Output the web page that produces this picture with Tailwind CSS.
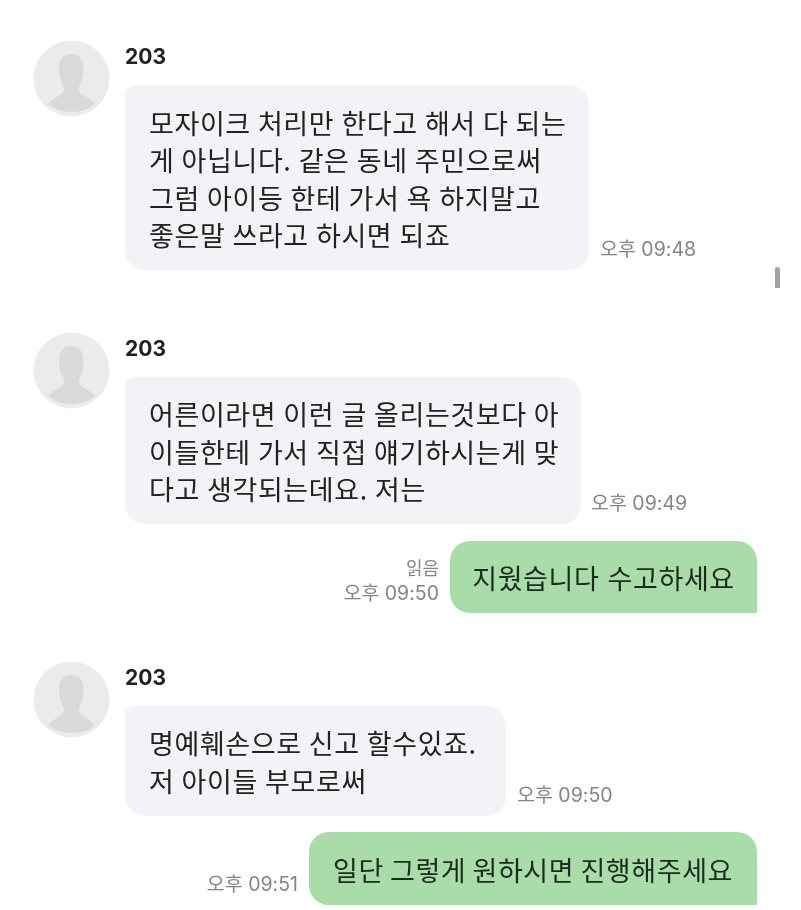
<!DOCTYPE html>
<html lang="ko">
<head>
<meta charset="utf-8">
<script src="https://cdn.jsdelivr.net/npm/@tailwindcss/browser@4"></script>
</head>
<body class="bg-white overflow-hidden">
<main class="relative w-[801px] h-[910px] pt-10 pr-[44px] pl-[33px] flex flex-col font-['Noto_Sans_CJK_KR','Noto_Sans',sans-serif] text-[#222222] blur-[0.4px]">

  <section class="flex gap-[15px]">
    <svg class="w-[77px] h-[77px] shrink-0 blur-[0.5px]" viewBox="0 0 77 77"><circle cx="38.5" cy="38.5" r="38" fill="#ebebec"/><path d="M38 14c-8 0-12.500 6-12 15 .3 7 2 13 4.500 17 1 2 1 5-.5 6.500C27 56 20 58 15 64c6 5 14 8 23.500 8S56 69 62 64c-5-6-12-8-15-11.500-1.500-1.500-1.500-4.500-.5-6.500 2.500-4 4-10 4.200-17C51 20 46 14 38 14z" fill="#d8d9da"/></svg>
    <div class="flex flex-col">
      <div class="h-[45px] leading-[34px] text-[21px] font-bold font-['Inter',sans-serif]">203</div>
      <div class="flex items-end gap-[11px]">
        <p class="bg-[#f2f3f7] rounded-[20px] rounded-tl-[10px] w-[464px] px-6 pt-[18.5px] pb-[16.5px] text-[27px] leading-[37.5px] tracking-[0.6px] [word-spacing:-1px] whitespace-nowrap">모자이크 처리만 한다고 해서 다 되는<br>게 아닙니다. 같은 동네 주민으로써<br>그럼 아이등 한테 가서 욕 하지말고<br>좋은말 쓰라고 하시면 되죠</p>
        <span class="mb-[8px] font-['Inter','Noto_Sans_CJK_KR',sans-serif] text-[19.5px] leading-[26px] text-[#858585] whitespace-nowrap">오후 09:48</span>
      </div>
    </div>
  </section>

  <section class="flex gap-[15px] mt-[62px]">
    <svg class="w-[77px] h-[77px] shrink-0 blur-[0.5px]" viewBox="0 0 77 77"><circle cx="38.5" cy="38.5" r="38" fill="#ebebec"/><path d="M38 14c-8 0-12.500 6-12 15 .3 7 2 13 4.500 17 1 2 1 5-.5 6.500C27 56 20 58 15 64c6 5 14 8 23.500 8S56 69 62 64c-5-6-12-8-15-11.500-1.500-1.500-1.500-4.500-.5-6.500 2.500-4 4-10 4.200-17C51 20 46 14 38 14z" fill="#d8d9da"/></svg>
    <div class="flex flex-col">
      <div class="h-[45px] leading-[34px] text-[21px] font-bold font-['Inter',sans-serif]">203</div>
      <div class="flex items-end gap-[10px]">
        <p class="bg-[#f2f3f7] rounded-[20px] rounded-tl-[10px] w-[456px] px-6 pt-[18px] pb-[16px] text-[27px] leading-[37.5px] tracking-[0.6px] [word-spacing:-1px] whitespace-nowrap">어른이라면 이런 글 올리는것보다 아<br>이들한테 가서 직접 얘기하시는게 맞<br>다고 생각되는데요. 저는</p>
        <span class="mb-[8px] font-['Inter','Noto_Sans_CJK_KR',sans-serif] text-[19.5px] leading-[26px] text-[#858585] whitespace-nowrap">오후 09:49</span>
      </div>
    </div>
  </section>

  <section class="flex justify-end items-end gap-[11px] mt-[17px]">
    <div class="flex flex-col items-end mb-[8px] font-['Inter','Noto_Sans_CJK_KR',sans-serif] text-[#858585] whitespace-nowrap">
      <span class="text-[18px] leading-[24px]">읽음</span>
      <span class="text-[19.5px] leading-[24px]">오후 09:50</span>
    </div>
    <p class="bg-[#aadcaa] rounded-[20px] rounded-br-none h-[72px] w-[307px] text-center text-[27px] leading-[74px] tracking-[0.6px] text-[#1c2b1f] whitespace-nowrap">지웠습니다 수고하세요</p>
  </section>

  <section class="flex gap-[15px] mt-[48px]">
    <svg class="w-[77px] h-[77px] shrink-0 blur-[0.5px]" viewBox="0 0 77 77"><circle cx="38.5" cy="38.5" r="38" fill="#ebebec"/><path d="M38 14c-8 0-12.500 6-12 15 .3 7 2 13 4.500 17 1 2 1 5-.5 6.500C27 56 20 58 15 64c6 5 14 8 23.500 8S56 69 62 64c-5-6-12-8-15-11.500-1.500-1.500-1.500-4.500-.5-6.500 2.500-4 4-10 4.200-17C51 20 46 14 38 14z" fill="#d8d9da"/></svg>
    <div class="flex flex-col">
      <div class="h-[45px] leading-[34px] text-[21px] font-bold font-['Inter',sans-serif]">203</div>
      <div class="flex items-end gap-[11px]">
        <p class="bg-[#f2f3f7] rounded-[20px] rounded-tl-[10px] w-[381px] px-6 pt-[18.5px] pb-[16.5px] text-[27px] leading-[37.5px] tracking-[0.6px] [word-spacing:-1px] whitespace-nowrap">명예훼손으로 신고 할수있죠.<br>저 아이들 부모로써</p>
        <span class="mb-[8px] font-['Inter','Noto_Sans_CJK_KR',sans-serif] text-[19.5px] leading-[26px] text-[#858585] whitespace-nowrap">오후 09:50</span>
      </div>
    </div>
  </section>

  <section class="flex justify-end items-end gap-[11px] mt-[16px]">
    <span class="mb-[8px] font-['Inter','Noto_Sans_CJK_KR',sans-serif] text-[19.5px] leading-[26px] text-[#858585] whitespace-nowrap">오후 09:51</span>
    <p class="bg-[#aadcaa] rounded-[20px] rounded-br-none h-[73px] w-[448px] text-center text-[27px] leading-[75px] tracking-[0.6px] [word-spacing:-2px] text-[#1c2b1f] whitespace-nowrap">일단 그렇게 원하시면 진행해주세요</p>
  </section>

  <div class="absolute left-[775px] top-[267px] w-[5px] h-[21px] rounded-t-full bg-[#a3a3a3]"></div>
</main>
</body>
</html>
